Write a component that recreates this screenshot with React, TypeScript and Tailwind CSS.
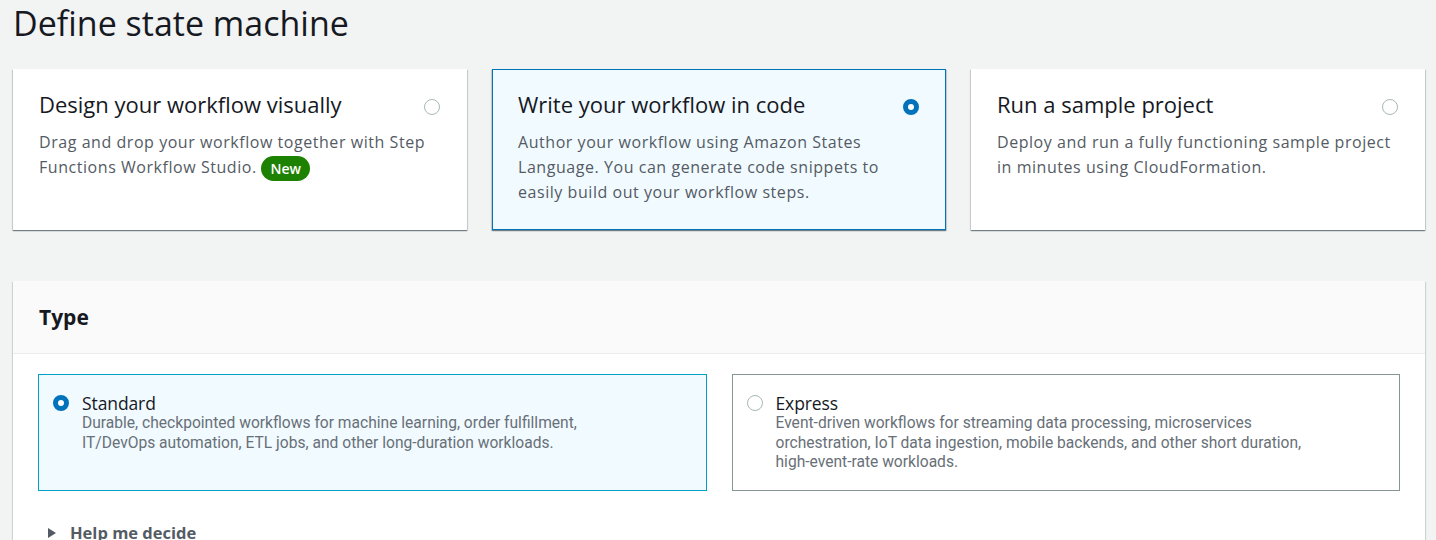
import { useState } from "react";

type Choice = {
  id: string;
  title: string;
  text: React.ReactNode;
};

const choices: Choice[] = [
  {
    id: "visual",
    title: "Design your workflow visually",
    text: (
      <>
        Drag and drop your workflow together with Step Functions Workflow Studio.{" "}
        <span className="inline-block rounded-full bg-[#1d8102] px-[9px] text-[14px] leading-[25px] font-semibold tracking-normal text-white align-middle">
          New
        </span>
      </>
    ),
  },
  {
    id: "code",
    title: "Write your workflow in code",
    text: "Author your workflow using Amazon States Language. You can generate code snippets to easily build out your workflow steps.",
  },
  {
    id: "sample",
    title: "Run a sample project",
    text: "Deploy and run a fully functioning sample project in minutes using CloudFormation.",
  },
];

const types = [
  {
    id: "standard",
    label: "Standard",
    text: "Durable, checkpointed workflows for machine learning, order fulfillment, IT/DevOps automation, ETL jobs, and other long-duration workloads.",
  },
  {
    id: "express",
    label: "Express",
    text: "Event-driven workflows for streaming data processing, microservices orchestration, IoT data ingestion, mobile backends, and other short duration, high-event-rate workloads.",
  },
];

function Radio({ checked }: { checked: boolean }) {
  return checked ? (
    <span className="block h-[16px] w-[16px] shrink-0 rounded-full border-[5px] border-[#0073bb] bg-white" />
  ) : (
    <span className="block h-[16px] w-[16px] shrink-0 rounded-full border border-[#aab7b8] bg-white" />
  );
}

export default function App() {
  const [choice, setChoice] = useState("code");
  const [type, setType] = useState("standard");

  return (
    <div className="min-h-screen bg-[#f2f3f3] pl-[13px] pr-[11px] text-[#16191f] font-['Open_Sans',sans-serif]">
      <h1 className="pt-[1px] text-[34px] leading-[44px] font-normal">Define state machine</h1>

      {/* workflow choice cards */}
      <div className="mt-[24px] grid grid-cols-3 gap-[25px]">
        {choices.map((c) => {
          const sel = c.id === choice;
          return (
            <div
              key={c.id}
              onClick={() => setChoice(c.id)}
              className={`h-[161px] cursor-pointer px-[25px] pt-[19px] shadow-[0_1px_1px_0_rgba(0,28,36,0.4),1px_1px_1px_0_rgba(0,28,36,0.12),-1px_1px_1px_0_rgba(0,28,36,0.12)] ${
                sel ? "border border-[#0073bb] bg-[#f1faff]" : "border border-transparent bg-white"
              }`}
            >
              <div className="flex items-start justify-between">
                <div className="text-[22px] leading-[30px]">{c.title}</div>
                <div className="pt-[10px] pr-[1px]">
                  <Radio checked={sel} />
                </div>
              </div>
              <div className="mt-[11px] text-[16px] leading-[25px] tracking-[0.55px] text-[#545b64]">{c.text}</div>
            </div>
          );
        })}
      </div>

      {/* Type panel */}
      <div className="mt-[51px] bg-white shadow-[0_1px_1px_0_rgba(0,28,36,0.3),1px_1px_1px_0_rgba(0,28,36,0.1),-1px_1px_1px_0_rgba(0,28,36,0.1)]">
        <div className="h-[73px] border-b border-[#eaeded] bg-[#fafafa] px-[26px] pt-[21px]">
          <h2 className="text-[21px] leading-[30px] font-bold">Type</h2>
        </div>
        <div className="px-[25px] pt-[20px] pb-[20px]">
          <div className="grid grid-cols-2 gap-[25px]">
            {types.map((t) => {
              const sel = t.id === type;
              return (
                <div
                  key={t.id}
                  onClick={() => setType(t.id)}
                  className={`flex h-[117px] cursor-pointer gap-[12px] border px-[14px] pt-[17px] ${
                    sel ? "border-[#00a1c9] bg-[#f1faff]" : "border-[#879596] bg-white"
                  }`}
                >
                  <div className="pt-[3px]">
                    <Radio checked={sel} />
                  </div>
                  <div className="pl-[1px]">
                    <div className="text-[17.5px] leading-[22px] tracking-[-0.1px]">{t.label}</div>
                    <div className="max-w-[545px] font-['Roboto',sans-serif] text-[15.6px] leading-[19.5px] text-[#687078]">
                      {t.text}
                    </div>
                  </div>
                </div>
              );
            })}
          </div>
          <div className="mt-[30px] flex items-center gap-[13px] pl-[9px] text-[16.5px] font-bold text-[#545b64]">
            <svg width="10" height="12" viewBox="0 0 10 12">
              <path d="M1 1 L9 6 L1 11 Z" fill="#545b64" />
            </svg>
            <span>Help me decide</span>
          </div>
        </div>
      </div>
    </div>
  );
}
